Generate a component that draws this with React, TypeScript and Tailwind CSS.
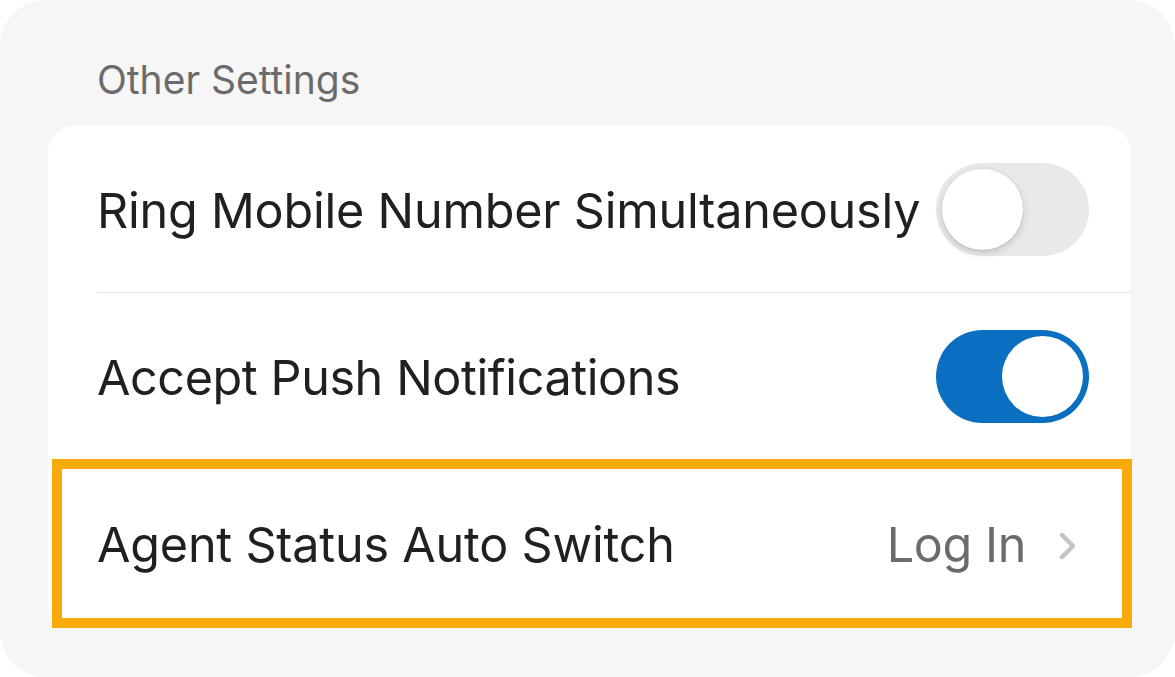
import React from 'react'

type ToggleProps = {
  on: boolean;
};

const Toggle = ({ on }: ToggleProps) => {
  return (
    <div
      className={`relative w-[153px] h-[93px] shrink-0 rounded-full ${on ? 'bg-[#0a6fc0]' : 'bg-[#e9e9ea]'}`}
    >
      <div
        className={`absolute top-[6px] w-[81px] h-[81px] rounded-full bg-white ${
          on ? 'left-[66px]' : 'left-[6px] shadow-[0_3px_8px_rgba(0,0,0,0.15),0_1px_2px_rgba(0,0,0,0.1)]'
        }`}
      ></div>
    </div>
  )
}

const App = () => {
  return (
    <div
      className="w-[1175px] h-[677px] bg-[#f6f6f6] rounded-[46px] pl-[48px] pr-[44px] overflow-hidden"
      style={{ fontFamily: 'Inter, "Noto Sans", sans-serif' }}
    >
      <div className="pt-[60px] pl-[49px] text-[39px] leading-none text-[#6b6b6b] mb-[27px]">
        Other Settings
      </div>
      <div className="bg-white rounded-[26px]">
        <div className="pl-[49px]">
          <div className="flex items-center justify-between h-[167px] pr-[42px] border-b border-[#e6e6e6]">
            <span className="pt-[4px] text-[48.5px] text-[#202020] tracking-[-0.2px]">Ring Mobile Number Simultaneously</span>
            <Toggle on={false} />
          </div>
        </div>
        <div className="pl-[49px]">
          <div className="flex items-center justify-between h-[166px] pr-[42px]">
            <span className="pt-[4px] text-[48.5px] text-[#202020] tracking-[-0.4px]">Accept Push Notifications</span>
            <Toggle on={true} />
          </div>
        </div>
        <div className="ml-[4px] mr-[-1px] mb-[-4px] h-[169px] border-[10px] border-[#f8aa08] flex items-center justify-between pl-[35px] pr-[45px]">
          <span className="pt-[4px] text-[48.5px] text-[#202020] tracking-[-0.2px]">Agent Status Auto Switch</span>
          <div className="flex items-center gap-[33px] pt-[4px]">
            <span className="text-[48.5px] text-[#6b6b6b] tracking-[-0.4px]">Log In</span>
            <svg width="18" height="28" viewBox="0 0 18 28" fill="none">
              <path d="M3 3 L14 14 L3 25" stroke="#c4c4c4" strokeWidth="4.5" strokeLinecap="round" strokeLinejoin="round" />
            </svg>
          </div>
        </div>
      </div>
    </div>
  )
}

export default App
